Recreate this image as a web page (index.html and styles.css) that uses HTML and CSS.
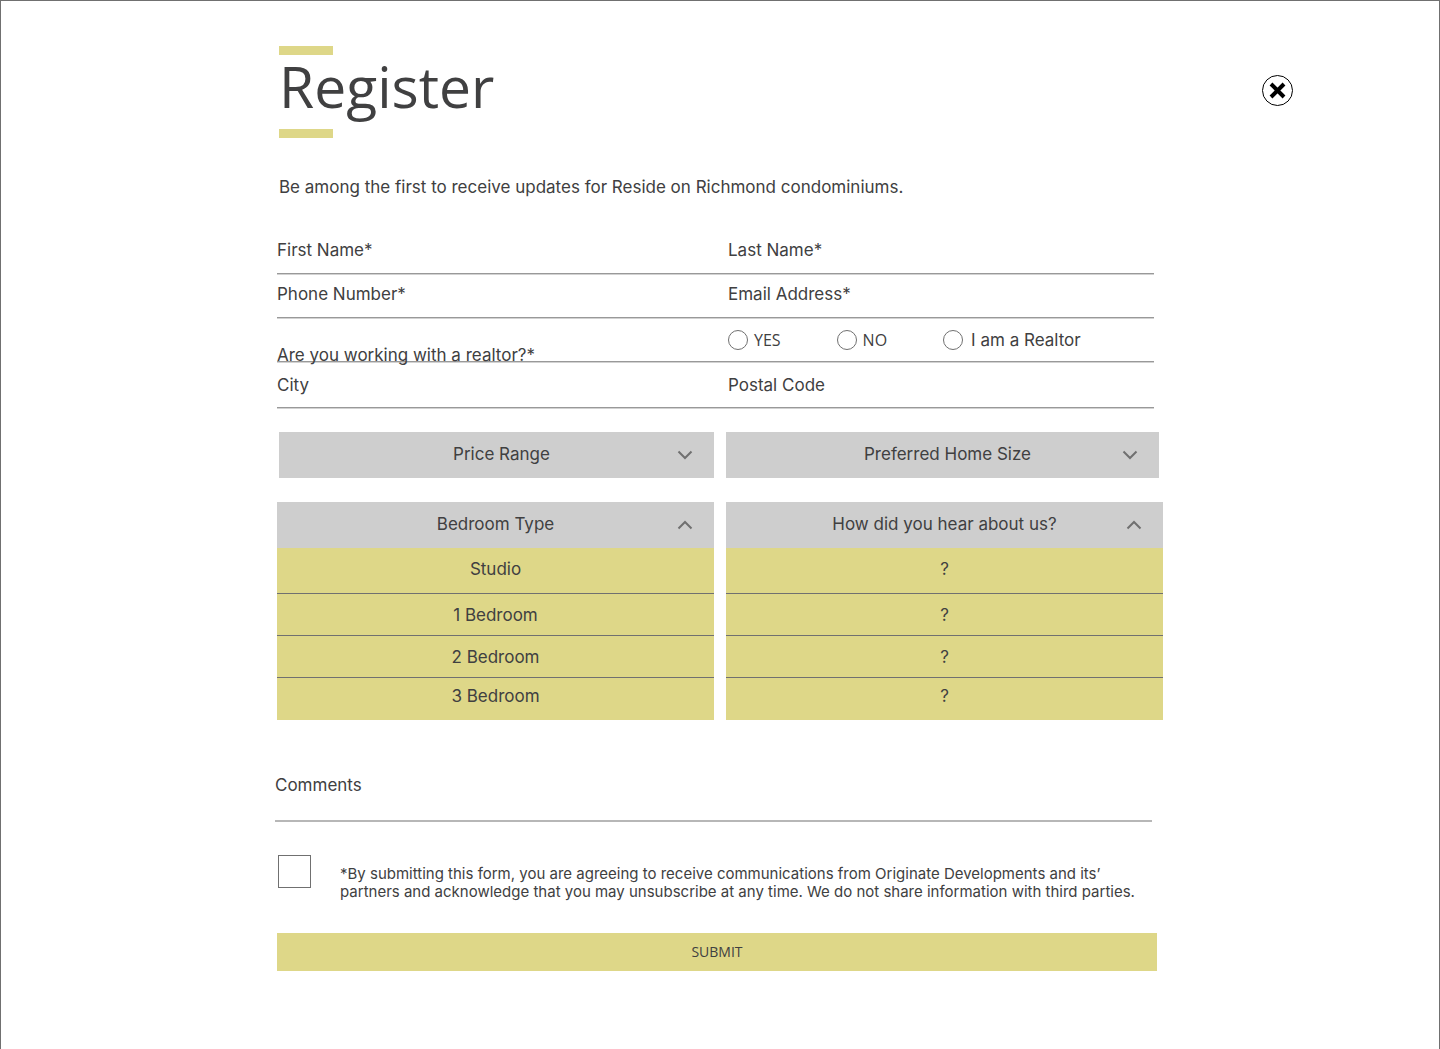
FILE: index.html
```html
<!DOCTYPE html>
<html lang="en">
<head>
<meta charset="utf-8">
<meta name="viewport" content="width=device-width, initial-scale=1">
<title>Register</title>
<link rel="stylesheet" href="styles.css">
</head>
<body>
<main class="page">
  <header class="heading">
    <h1 class="title">Register</h1>
  </header>
  <button class="close" type="button" aria-label="Close">
    <svg width="31" height="31" viewBox="0 0 31 31" aria-hidden="true">
      <circle cx="15.5" cy="15.5" r="15" fill="#fff" stroke="#000"/>
      <path d="M9 9l13 13M22 9L9 22" stroke="#000" stroke-width="4"/>
    </svg>
  </button>

  <form class="form">
    <p class="intro">Be among the first to receive updates for Reside on Richmond condominiums.</p>

    <div class="fields">
      <div class="row">
        <div class="field"><label for="first">First Name*</label><input class="text" id="first" type="text" required></div>
        <div class="field"><label for="last">Last Name*</label><input class="text" id="last" type="text" required></div>
      </div>
      <div class="row">
        <div class="field"><label for="phone">Phone Number*</label><input class="text" id="phone" type="tel" required></div>
        <div class="field"><label for="email">Email Address*</label><input class="text" id="email" type="email" required></div>
      </div>
      <div class="row row-realtor" role="radiogroup" aria-labelledby="realtor">
        <span class="question" id="realtor">Are you working with a realtor?*</span>
        <div class="choices">
          <label class="choice choice-caps"><input class="radio" type="radio" name="realtor">YES</label>
          <label class="choice choice-caps"><input class="radio" type="radio" name="realtor">NO</label>
          <label class="choice"><input class="radio" type="radio" name="realtor">I am a Realtor</label>
        </div>
      </div>
      <div class="row row-last">
        <div class="field"><label for="city">City</label><input class="text" id="city" type="text"></div>
        <div class="field"><label for="postal">Postal Code</label><input class="text" id="postal" type="text"></div>
      </div>
    </div>

    <div class="pair pair-closed">
      <div class="dropdown">
        <select class="bar" aria-label="Price Range"><option>Price Range</option></select>
        <svg class="chevron" width="16" height="10" viewBox="0 0 16 10" aria-hidden="true"><path d="M1.500 1.500L8 8l6.500-6.500"/></svg>
      </div>
      <div class="dropdown">
        <select class="bar" aria-label="Preferred Home Size"><option>Preferred Home Size</option></select>
        <svg class="chevron" width="16" height="10" viewBox="0 0 16 10" aria-hidden="true"><path d="M1.500 1.500L8 8l6.500-6.500"/></svg>
      </div>
    </div>

    <div class="pair">
      <div class="panel">
        <div class="dropdown">
          <button class="bar" type="button" aria-expanded="true" aria-controls="bedrooms">Bedroom Type</button>
          <svg class="chevron" width="16" height="10" viewBox="0 0 16 10" aria-hidden="true"><path d="M1.500 8.500L8 2l6.500 6.500"/></svg>
        </div>
        <select class="options" id="bedrooms" size="4" aria-label="Bedroom Type">
          <option>Studio</option>
          <option>1 Bedroom</option>
          <option>2 Bedroom</option>
          <option>3 Bedroom</option>
        </select>
      </div>
      <div class="panel">
        <div class="dropdown">
          <button class="bar" type="button" aria-expanded="true" aria-controls="source">How did you hear about us?</button>
          <svg class="chevron" width="16" height="10" viewBox="0 0 16 10" aria-hidden="true"><path d="M1.500 8.500L8 2l6.500 6.500"/></svg>
        </div>
        <select class="options" id="source" size="4" aria-label="How did you hear about us?">
          <option>?</option>
          <option>?</option>
          <option>?</option>
          <option>?</option>
        </select>
      </div>
    </div>

    <div class="comments"><label for="comments">Comments</label><input class="text" id="comments" type="text"></div>

    <div class="consent">
      <input class="tick" id="consent" type="checkbox">
      <label class="terms" for="consent">*By submitting this form, you are agreeing to receive communications from Originate Developments and its’<br>partners and acknowledge that you may unsubscribe at any time. We do not share information with third parties.</label>
    </div>

    <button class="submit" type="submit">SUBMIT</button>
  </form>
</main>
</body>
</html>
```
FILE: styles.css
```css
* { box-sizing: border-box; }

body {
  margin: 0;
  background: #fff;
  color: #404041;
  font: 17px/20px Inter, sans-serif;
}

input, select, button {
  margin: 0;
  padding: 0;
  border: 0;
  border-radius: 0;
  background: none;
  color: inherit;
  font: inherit;
}

.page {
  display: grid;
  grid-template-columns: 1fr minmax(0, 886px) 1fr;
  align-items: start;
  min-height: 100vh;
  padding-top: 45px;
  border: 1px solid #707070;
  border-bottom: 0;
}

.heading { grid-column: 2; padding-left: 2px; }

.heading::before,
.heading::after {
  content: "";
  display: block;
  width: 54px;
  height: 9px;
  background: #ded788;
}

.title {
  margin: 0;
  padding-bottom: 12px;
  font: 400 57px/62px "Open Sans", sans-serif;
}

.close {
  grid-column: 3;
  justify-self: end;
  width: 31px;
  height: 31px;
  margin: 29px 146px 0 0;
}

.close svg { display: block; }

.form { grid-column: 2; padding-bottom: 78px; }

.intro { margin: 39px 0 33px; padding-left: 2px; }

.fields { width: 99%; }

.row {
  display: grid;
  grid-template-columns: 451px 1fr;
  padding: 10px 0 13px;
  border-bottom: 1px solid #999;
  box-shadow: 0 1px #d2d2d2;
}

.row-realtor { padding: 12px 0 11px; }
.row-last { padding: 13px 0 12px; }

.field { display: flex; gap: 8px; }

.text {
  flex: 1;
  min-width: 0;
  height: 20px;
  outline: 0;
}

.question { height: 20px; padding-top: 15px; }

.choices { display: flex; gap: 56px; }

.choice { display: flex; align-items: center; gap: 8px; height: 20px; }
.choice-caps { gap: 6px; font: 16px/20px "Open Sans", sans-serif; }

.radio {
  appearance: none;
  width: 20px;
  height: 20px;
  border: 1px solid #707070;
  border-radius: 50%;
}

.pair {
  display: grid;
  grid-template-columns: 1fr 1fr;
  gap: 12px;
  margin-top: 24px;
}

.pair-closed .dropdown:first-child { margin-left: 2px; }
.pair-closed .dropdown:last-child { margin-right: 4px; }
.pair-closed .bar { padding-left: 10px; }

.dropdown { display: grid; align-items: center; }

.bar, .chevron { grid-area: 1 / 1; }

.bar {
  appearance: none;
  width: 100%;
  height: 46px;
  padding-bottom: 2px;
  background: #cecece;
  text-align: center;
  text-align-last: center;
}

.chevron {
  justify-self: end;
  margin-right: 21px;
  fill: none;
  stroke: #707070;
  stroke-width: 2;
  pointer-events: none;
}

.options {
  display: block;
  width: 100%;
  height: 172px;
  overflow: hidden;
  background: #ded788;
  outline: 0;
}

.options option {
  min-height: 0;
  padding: 11px 0 10px;
  border-bottom: 1px solid #707070;
  line-height: 20px;
  text-align: center;
}

.options option:first-child { padding-bottom: 14px; }
.options option:last-child { padding-top: 8px; border-bottom: 0; }

.comments {
  display: flex;
  gap: 8px;
  width: 99%;
  margin: 55px 0 33px -2px;
  padding-bottom: 25px;
  border-bottom: 2px solid #b7b7b7;
}

.consent {
  display: flex;
  gap: 29px;
  padding-left: 1px;
}

.tick {
  appearance: none;
  flex: none;
  width: 33px;
  height: 33px;
  border: 1px solid #707070;
}

.terms { padding-top: 10px; font-size: 15px; line-height: 18px; }

.submit {
  display: block;
  width: 880px;
  max-width: 100%;
  height: 38px;
  margin-top: 32px;
  background: #ded788;
  font: 14px/20px "Open Sans", sans-serif;
}
```
